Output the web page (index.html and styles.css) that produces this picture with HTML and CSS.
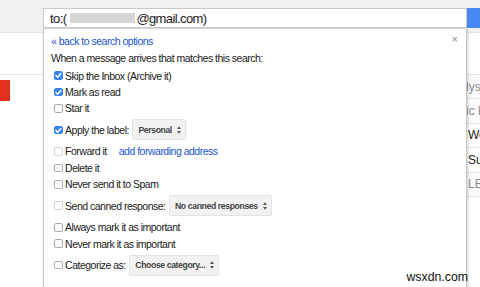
FILE: index.html
```html
<!DOCTYPE html>
<html lang="en">
<head>
<meta charset="utf-8">
<title>Gmail filter</title>
<link rel="stylesheet" href="styles.css">
</head>
<body>
<div class="app">
  <header class="topbar">
    <div class="search">
      <div class="search-input">
        <span>to:(</span><span class="redact"></span><span>@gmail.com)</span>
      </div>
      <div class="search-btn"></div>
    </div>
  </header>
  <div class="toolbar"></div>
  <div class="main">
    <aside class="sidebar"><div class="compose"></div></aside>
    <div class="list">
      <div class="row read"><span class="frag shift">lyst</span></div>
      <div class="row read"><span class="frag shift">ic F</span></div>
      <div class="row"><span class="frag">We</span></div>
      <div class="row"><span class="frag">Su</span></div>
      <div class="row read"><span class="frag">LE</span></div>
    </div>
  </div>

  <div class="filter-panel">
    <div class="panel-head">
      <a class="back" href="#">« back to search options</a>
      <span class="close">×</span>
    </div>
    <div class="intro">When a message arrives that matches this search:</div>
    <div class="options">
      <div class="opt"><span class="cb on"><svg viewBox="0 0 9 9"><path d="M2 4.6 L3.8 6.4 L7.1 2.6"/></svg></span>Skip the Inbox (Archive it)</div>
      <div class="opt"><span class="cb on"><svg viewBox="0 0 9 9"><path d="M2 4.6 L3.8 6.4 L7.1 2.6"/></svg></span>Mark as read</div>
      <div class="opt"><span class="cb"></span>Star it</div>
      <div class="opt tall"><span class="cb on"><svg viewBox="0 0 9 9"><path d="M2 4.6 L3.8 6.4 L7.1 2.6"/></svg></span>Apply the label:<span class="select">Personal<svg class="arrows" viewBox="0 0 4 8"><polygon points="0,3 2,0.3 4,3"/><polygon points="0,5 2,7.7 4,5"/></svg></span></div>
      <div class="opt"><span class="cb dim"></span>Forward it<a class="fwd" href="#">add forwarding address</a></div>
      <div class="opt"><span class="cb"></span>Delete it</div>
      <div class="opt"><span class="cb"></span>Never send it to Spam</div>
      <div class="opt tall"><span class="cb dim"></span>Send canned response:<span class="select">No canned responses<svg class="arrows" viewBox="0 0 4 8"><polygon points="0,3 2,0.3 4,3"/><polygon points="0,5 2,7.7 4,5"/></svg></span></div>
      <div class="opt"><span class="cb"></span>Always mark it as important</div>
      <div class="opt"><span class="cb"></span>Never mark it as important</div>
      <div class="opt tall"><span class="cb"></span>Categorize as:<span class="select">Choose category...<svg class="arrows" viewBox="0 0 4 8"><polygon points="0,3 2,0.3 4,3"/><polygon points="0,5 2,7.7 4,5"/></svg></span></div>
    </div>
  </div>

  <div class="watermark">wsxdn.com</div>
</div>
</body>
</html>
```

FILE: styles.css
```css
* { box-sizing: border-box; }
html, body { margin: 0; padding: 0; }
body {
  width: 480px;
  height: 287px;
  overflow: hidden;
  background: #fff;
  font-family: "Liberation Sans", Arial, sans-serif;
  color: #222;
}
.app {
  position: relative;
  width: 480px;
  height: 287px;
  overflow: hidden;
}

/* top bar */
.topbar {
  height: 33px;
  background: #f1f1f1;
  border-bottom: 1px solid #e2e2e2;
  display: flex;
  align-items: flex-start;
  padding: 8px 0 0 43px;
}
.search {
  display: flex;
  flex: 1;
  height: 20px;
}
.search-input {
  width: 424px;
  height: 20px;
  background: #fff;
  border: 1px solid #c9c9c9;
  display: flex;
  align-items: center;
  padding-left: 6px;
  font-size: 13px;
  letter-spacing: -0.6px;
  color: #1a1a1a;
}
.redact {
  width: 65px;
  height: 10px;
  background: #d6d6d6;
  margin: 0 1px 0 4px;
}
.search-btn {
  flex: 1;
  background: #4a89f3;
}

/* page under the panel */
.toolbar {
  height: 42px;
  border-bottom: 1px solid #e5e5e5;
}
.main {
  display: flex;
}
.sidebar {
  width: 150px;
  flex: none;
}
.compose {
  margin-top: 5px;
  width: 10px;
  height: 21px;
  background: #e2301f;
}
.list {
  flex: 1;
}
.row {
  height: 24.4px;
  border-bottom: 1px solid #e6e6e6;
  display: flex;
  align-items: center;
  padding-left: 318px;
  font-size: 12px;
  color: #222;
  white-space: nowrap;
  overflow: hidden;
}
.row.read {
  color: #8a8a8a;
  background: #fbfbfb;
}
.frag.shift { margin-left: -2px; }

/* filter panel (dropdown over the page) */
.filter-panel {
  position: absolute;
  left: 43px;
  top: 28px;
  width: 424px;
  height: 270px;
  background: #fff;
  border: 1px solid #c9c9c9;
  border-top-color: #d8d8d8;
  box-shadow: 1px 2px 3px rgba(0, 0, 0, 0.2);
  padding: 0 7px;
  font-size: 10.5px;
  letter-spacing: -0.5px;
  color: #1a1a1a;
}
.panel-head {
  display: flex;
  justify-content: space-between;
  align-items: center;
  height: 16px;
  margin-top: 4px;
}
.back {
  color: #1a55cc;
  text-decoration: none;
}
.close {
  color: #8a8a8a;
  font-size: 11px;
  letter-spacing: 0;
  margin-top: -4px;
  margin-right: 1px;
}
.intro {
  height: 16px;
  line-height: 16px;
  margin-top: 1px;
}
.options {
  margin-top: 1.5px;
  padding-left: 3px;
}
.opt {
  display: flex;
  align-items: center;
  height: 16.4px;
  white-space: nowrap;
}
.opt.tall {
  height: 26.6px;
}
.cb {
  flex: none;
  width: 8.7px;
  height: 8.7px;
  margin-right: 2.4px;
  border: 1px solid #ababab;
  border-radius: 2px;
  background: #fff;
  display: flex;
}
.cb svg {
  fill: none;
  stroke: #fff;
  stroke-width: 1.5;
  stroke-linecap: round;
  stroke-linejoin: round;
}
.cb.on {
  background: #3b84f5;
  border-color: #3b84f5;
}
.cb.on svg {
  margin: -1px;
  width: 8.7px;
  height: 8.7px;
}
.cb.dim {
  border-color: #d3d3d3;
}
.fwd {
  margin-left: 12px;
  color: #1a55cc;
  text-decoration: none;
}
.select {
  display: inline-flex;
  align-items: center;
  gap: 5px;
  height: 21px;
  margin-left: 3.5px;
  padding: 0 4px 0 5px;
  background: #f2f2f2;
  border: 1px solid #e3e3e3;
  border-radius: 2px;
  font-size: 8.7px;
  font-weight: bold;
  letter-spacing: -0.4px;
  color: #444;
}
.arrows {
  width: 4px;
  height: 8px;
  fill: #555;
}

.watermark {
  position: absolute;
  right: 12px;
  top: 269px;
  font-size: 12.3px;
  line-height: 16px;
  color: #111;
}
```
